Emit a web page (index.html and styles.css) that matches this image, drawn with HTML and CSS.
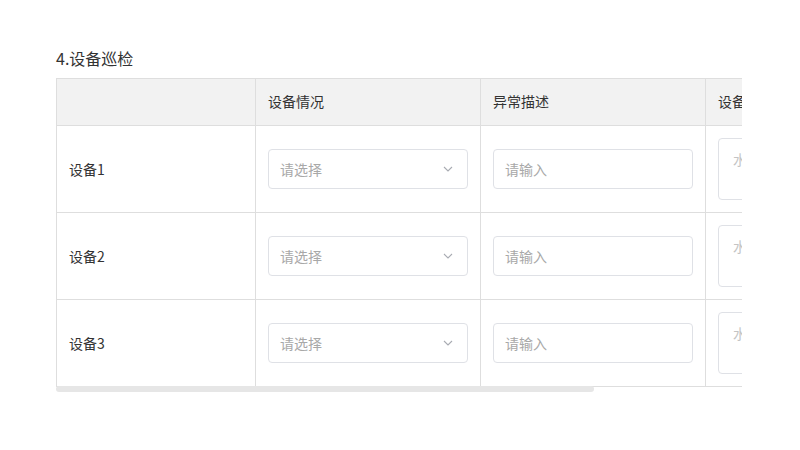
FILE: index.html
```html
<!DOCTYPE html>
<html lang="zh-CN">
<head>
<meta charset="utf-8">
<title>设备巡检</title>
<link rel="stylesheet" href="styles.css">
</head>
<body>
<div class="wrap">
  <div class="title">4.设备巡检</div>
  <div class="scroller">
    <table class="grid">
      <colgroup>
        <col class="c1"><col class="c2"><col class="c3"><col class="c4">
      </colgroup>
      <thead>
        <tr><th></th><th>设备情况</th><th>异常描述</th><th>设备备注</th></tr>
      </thead>
      <tbody>
        <tr>
          <td>设备1</td>
          <td><div class="select"><span class="ph">请选择</span><svg class="arrow" viewBox="0 0 10 6" width="10" height="6"><path d="M1 1 L5 5 L9 1" fill="none" stroke="#a8abb2" stroke-width="1.1"/></svg></div></td>
          <td><div class="input"><span class="ph">请输入</span></div></td>
          <td><div class="textarea"><span class="ph2">水压正常</span></div></td>
        </tr>
        <tr>
          <td>设备2</td>
          <td><div class="select"><span class="ph">请选择</span><svg class="arrow" viewBox="0 0 10 6" width="10" height="6"><path d="M1 1 L5 5 L9 1" fill="none" stroke="#a8abb2" stroke-width="1.1"/></svg></div></td>
          <td><div class="input"><span class="ph">请输入</span></div></td>
          <td><div class="textarea"><span class="ph2">水压正常</span></div></td>
        </tr>
        <tr>
          <td>设备3</td>
          <td><div class="select"><span class="ph">请选择</span><svg class="arrow" viewBox="0 0 10 6" width="10" height="6"><path d="M1 1 L5 5 L9 1" fill="none" stroke="#a8abb2" stroke-width="1.1"/></svg></div></td>
          <td><div class="input"><span class="ph">请输入</span></div></td>
          <td><div class="textarea"><span class="ph2">水压正常</span></div></td>
        </tr>
      </tbody>
    </table>
  </div>
  <div class="scrollbar"></div>
</div>
</body>
</html>
```
FILE: styles.css
```css
html, body {
  margin: 0;
  padding: 0;
  background: #ffffff;
}
body {
  font-family: "Noto Sans CJK SC", "Noto Sans", "Liberation Sans", sans-serif;
  color: #333333;
  font-size: 14px;
}
.wrap {
  padding: 47px 56px 0 56px;
}
.title {
  font-size: 16px;
  line-height: 22px;
  color: #333333;
  margin-bottom: 9px;
}
.scroller {
  width: 686px;
  overflow: hidden;
}
.grid {
  width: 875px;
  table-layout: fixed;
  border-collapse: collapse;
}
.c1 { width: 199px; }
.c2 { width: 225px; }
.c3 { width: 225px; }
.c4 { width: 226px; }
.grid th,
.grid td {
  border: 1px solid #dedede;
  padding: 12px;
  text-align: left;
  font-weight: normal;
  font-size: 14px;
  line-height: 20px;
  vertical-align: middle;
}
.grid th {
  background: #f2f2f2;
  height: 22px;
  padding-top: 11px;
  padding-bottom: 13px;
  color: #333333;
}
.grid td {
  height: 62px;
}
.cell-text {
  display: block;
}
.select,
.input {
  box-sizing: border-box;
  width: 200px;
  height: 40px;
  border: 1px solid #dfe1e6;
  border-radius: 4px;
  display: flex;
  align-items: center;
  padding: 0 14px 1px 11px;
  justify-content: space-between;
}
.ph {
  color: #a8a8a8;
  font-size: 14px;
}
.arrow {
  display: block;
}
.textarea {
  box-sizing: border-box;
  width: 200px;
  height: 62px;
  border: 1px solid #dfe1e6;
  border-radius: 4px;
  padding: 10px 14px;
  line-height: 20px;
}
.ph2 {
  color: #c4c4c4;
  font-size: 14px;
}
.scrollbar {
  width: 538px;
  height: 6px;
  margin-top: -1px;
  background: #e6e6e6;
  border-radius: 3px;
}
```
